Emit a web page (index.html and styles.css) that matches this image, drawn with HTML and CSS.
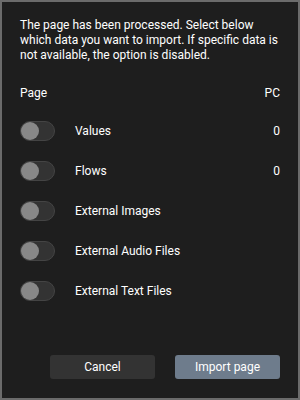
FILE: index.html
```html
<!DOCTYPE html>
<html>
<head>
<meta charset="utf-8">
<link rel="stylesheet" href="styles.css">
</head>
<body>
<div class="dialog">
  <p class="intro">The page has been processed. Select below which data you want to import. If specific data is not available, the option is disabled.</p>
  <div class="header">
    <span>Page</span>
    <span>PC</span>
  </div>
  <div class="rows">
    <div class="row"><span class="toggle"><span class="knob"></span></span><span class="label">Values</span><span class="count">0</span></div>
    <div class="row"><span class="toggle"><span class="knob"></span></span><span class="label">Flows</span><span class="count">0</span></div>
    <div class="row"><span class="toggle"><span class="knob"></span></span><span class="label">External Images</span><span class="count"></span></div>
    <div class="row"><span class="toggle"><span class="knob"></span></span><span class="label">External Audio Files</span><span class="count"></span></div>
    <div class="row"><span class="toggle"><span class="knob"></span></span><span class="label">External Text Files</span><span class="count"></span></div>
  </div>
  <div class="actions">
    <button class="btn cancel">Cancel</button>
    <button class="btn primary">Import page</button>
  </div>
</div>
</body>
</html>
```
FILE: styles.css
```css
html, body {
  margin: 0;
  padding: 0;
  background: #1e1e1e;
}
.dialog {
  box-sizing: border-box;
  width: 300px;
  height: 400px;
  border: 2px solid #6b6b6b;
  background: #1e1e1e;
  color: #ffffff;
  font-family: Roboto, "Liberation Sans", sans-serif;
  font-size: 12px;
  line-height: 15px;
  padding: 16px 18px 0 18px;
  display: flex;
  flex-direction: column;
}
.intro {
  margin: 0;
}
.header {
  display: flex;
  justify-content: space-between;
  margin-top: 23px;
}
.rows {
  display: flex;
  flex-direction: column;
  gap: 20px;
  margin-top: 20px;
}
.row {
  display: flex;
  align-items: center;
  height: 20px;
}
.toggle {
  box-sizing: border-box;
  width: 35px;
  height: 20px;
  border-radius: 10px;
  background: #333333;
  border: 1px solid #444444;
  display: flex;
  align-items: center;
  padding-left: 0;
}
.knob {
  width: 18px;
  height: 18px;
  border-radius: 50%;
  background: #888888;
}
.label {
  margin-left: 20px;
  flex: 1;
}
.count {
  text-align: right;
}
.actions {
  margin-top: auto;
  margin-bottom: 19px;
  display: flex;
  justify-content: flex-end;
  gap: 20px;
}
.btn {
  width: 105px;
  height: 24px;
  border: none;
  border-radius: 3px;
  font-family: Roboto, "Liberation Sans", sans-serif;
  font-size: 12px;
  color: #ffffff;
  padding: 0;
}
.cancel {
  background: #333333;
}
.primary {
  background: #6e7c8c;
}
```
